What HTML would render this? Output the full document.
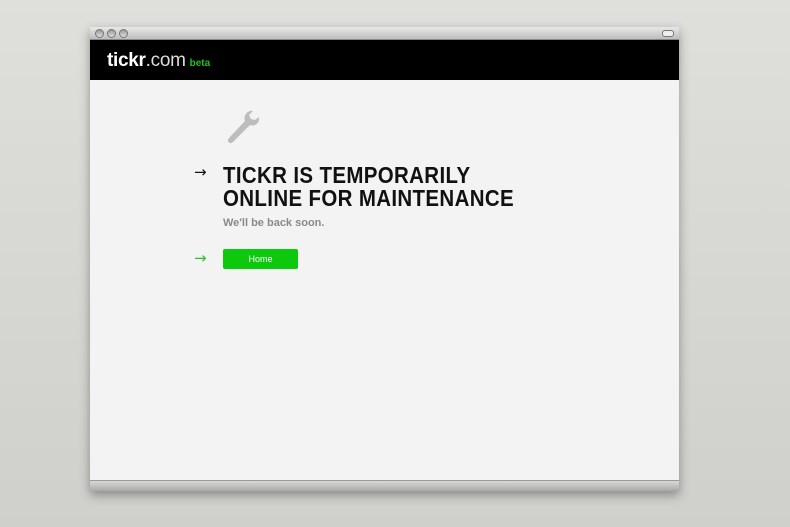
<!DOCTYPE html>
<html><head><style>
html,body{margin:0;padding:0}
body{width:790px;height:527px;background:linear-gradient(#dfdfdb,#cfd0cc);position:relative;overflow:hidden;font-family:"Liberation Sans",sans-serif}
.win{position:absolute;left:90px;top:27px;width:589px;height:464px;box-shadow:0 4px 10px rgba(0,0,0,.35);background:#f3f3f3}
.title{position:absolute;left:0;top:0;width:100%;height:12px;background:linear-gradient(#e8e8e8,#bdbdbd);border-bottom:1px solid #888}
.dot{position:absolute;top:2px;width:7px;height:7px;border-radius:50%;background:linear-gradient(#999,#ddd);border:1px solid #777}
.pill{position:absolute;right:5px;top:3px;width:10px;height:5px;border:1px solid #777;border-radius:3px;background:#eee}
.head{position:absolute;left:0;top:13px;width:100%;height:40px;background:#000}
.logo{position:absolute;left:17px;top:10px;color:#fff;font-size:19px;letter-spacing:-.3px}
.logo b{font-weight:bold}
.logo .com{font-weight:normal;color:#ddd}
.logo .beta{color:#1fc31f;font-size:10px;font-weight:bold;margin-left:4px;letter-spacing:0}
.bottom{position:absolute;left:0;bottom:0;width:100%;height:10px;background:linear-gradient(#d8d8d8,#a9a9a9);border-top:1px solid #999}
h1{position:absolute;left:133px;top:137px;margin:0;font-size:23px;line-height:23px;font-weight:bold;color:#111;transform:scaleX(.89);transform-origin:0 0;white-space:nowrap;letter-spacing:.4px}
.sub{position:absolute;left:133px;top:190px;font-size:11px;font-weight:bold;color:#8a8a8a}
.arr{position:absolute;left:104px;font-size:15px;font-family:"DejaVu Sans",sans-serif}
.btn{position:absolute;left:133px;top:222px;width:75px;height:20px;background:#0dc90d;border-radius:2px;color:#fff;font-size:9px;text-align:center;line-height:20px}
</style></head><body>
<div class="win">
<div class="title"><div class="dot" style="left:5px"></div><div class="dot" style="left:17px"></div><div class="dot" style="left:29px"></div><div class="pill"></div></div>
<div class="head"><div class="logo"><b>tickr</b><span class="com">.com</span><span class="beta">beta</span></div></div>
<svg style="position:absolute;left:133px;top:82px" width="38" height="38" viewBox="0 0 38 38"><path d="M30 2 L26 6 L28 10 L32 11 L36 8 C37 14 32 18 27 16 L10 33 C7 36 3 32 6 29 L22 12 C20 7 24 1 30 2Z" fill="#bdbdbd"/></svg>
<div class="arr" style="top:136px;color:#111">→</div>
<h1>TICKR IS TEMPORARILY<br>ONLINE FOR MAINTENANCE</h1>
<div class="sub">We'll be back soon.</div>
<div class="arr" style="top:222px;color:#2bc42b">→</div>
<div class="btn">Home</div>
<div class="bottom"></div>
</div>
</body></html>
